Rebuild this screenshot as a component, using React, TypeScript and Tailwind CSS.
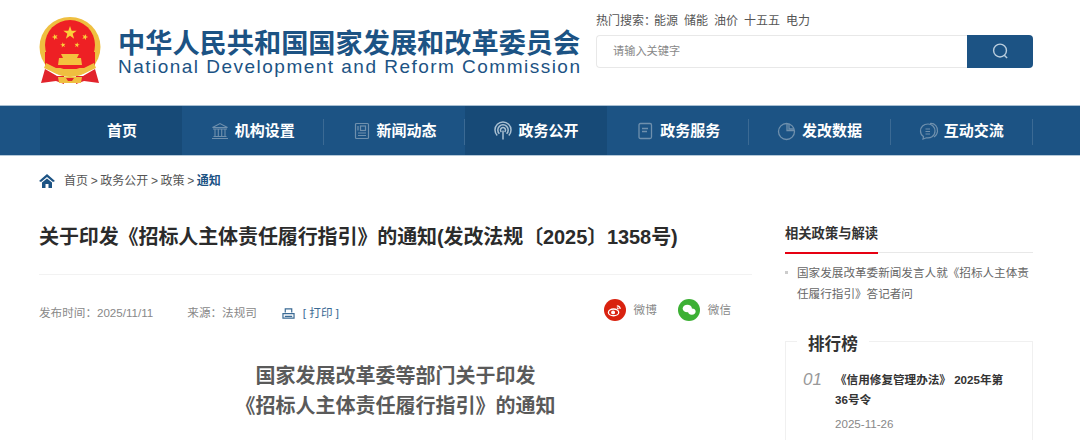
import React from "react";

const CJK = "font-['Liberation_Sans','Noto_Sans_CJK_SC',sans-serif]";

function Emblem() {
  const star = (cx: number, cy: number, r: number, rot = 0) => {
    const pts: string[] = [];
    for (let i = 0; i < 10; i++) {
      const a = ((-90 + rot + i * 36) * Math.PI) / 180;
      const rr = i % 2 === 0 ? r : r * 0.4;
      pts.push(`${cx + rr * Math.cos(a)},${cy + rr * Math.sin(a)}`);
    }
    return <polygon points={pts.join(" ")} fill="#fbd13a" />;
  };
  return (
    <svg width="62" height="67" viewBox="0 0 62 67" className="shrink-0">
      <ellipse cx="31" cy="30" rx="30.5" ry="30" fill="#efbf40" />
      <ellipse cx="31" cy="28" rx="25" ry="25" fill="#ee2024" />
      <rect x="6" y="35" width="50" height="16" fill="#ee2024" />
      {star(31, 16, 7)}
      {star(16, 20, 3.2, -20)}
      {star(46, 20, 3.2, 20)}
      {star(24, 28, 2.8, -10)}
      {star(38, 28, 2.8, 10)}
      <path d="M22 37 L40 37 L38 41 L42 41 L43 48 L19 48 L20 41 L24 41 Z" fill="#f4c23e" />
      <path d="M7 46 L19 52 L43 52 L55 46 L57 51 L44 57 L18 57 L5 51 Z" fill="#efbf40" />
      <path d="M24 57 C26 53 29 55 31 53 C33 55 36 53 38 57 Z" fill="#efbf40" />
      <path d="M6 52 L18 59 L25 59 L25 67 L17 64 L2 66 Z" fill="#e2232b" />
      <path d="M56 52 L44 59 L37 59 L37 67 L45 64 L60 66 Z" fill="#e2232b" />
      <path d="M19 60 L43 60 L42 66 L20 66 Z" fill="#efbf40" />
      <path d="M27 61 H35 L33 64 H29 Z" fill="#e2232b" />
    </svg>
  );
}

const iconCls = "w-[20px] h-[20px] text-[#6f90ad] shrink-0";
const NavIcons: Record<string, React.ReactNode> = {
  bank: (
    <svg viewBox="0 0 20 20" className={iconCls} fill="none" stroke="currentColor" strokeWidth="1.1">
      <path d="M2.5 6.5 L10 2.5 L17.5 6.5 Z M3 8 H17 M5 8.5 V15 M8.3 8.5 V15 M11.7 8.5 V15 M15 8.5 V15 M3.5 15.5 H16.5 M2 17.5 H18" />
    </svg>
  ),
  news: (
    <svg viewBox="0 0 20 20" className={iconCls} fill="none" stroke="currentColor" strokeWidth="1.2">
      <rect x="3.5" y="2.5" width="13" height="15" rx="1" />
      <rect x="8.5" y="5" width="5" height="4.5" />
      <path d="M6 5 V9.5 M6 12 H14 M6 14.5 H14" />
    </svg>
  ),
  signal: (
    <svg viewBox="0 0 20 20" className="w-[20px] h-[20px] text-[#a9c0d2] shrink-0" fill="none" stroke="currentColor" strokeWidth="1.5">
      <path d="M4.2 14.5 A8 8 0 1 1 15.8 14.5 M6.4 12.8 A5.2 5.2 0 1 1 13.6 12.8 M8.4 11 A2.5 2.5 0 1 1 11.6 11" />
      <path d="M10 9.5 V18.5" />
    </svg>
  ),
  doc: (
    <svg viewBox="0 0 20 20" className={iconCls} fill="none" stroke="currentColor" strokeWidth="1.3">
      <path d="M4 4 Q4 2.5 5.5 2.5 H15 Q16.5 2.5 16.5 4 V16 Q16.5 17.5 15 17.5 H5.5 Q4 17.5 4 16 Z" />
      <path d="M7 7.5 H13 M7 10.5 H12" />
    </svg>
  ),
  pie: (
    <svg viewBox="0 0 20 20" className={iconCls} fill="none" stroke="currentColor" strokeWidth="1.3">
      <circle cx="9.5" cy="10.5" r="8" />
      <path d="M10 2.5 V9.5 H17.5" />
      <path d="M12 3 V8 H17" />
    </svg>
  ),
  chat: (
    <svg viewBox="0 0 20 20" className={iconCls} fill="none" stroke="currentColor" strokeWidth="1.2">
      <path d="M9 3 C4.5 3 1.5 6 1.5 10 C1.5 12.5 2.8 14.5 4.5 15.5 L4 18 L7.5 16.8 C11 17.5 16 15.5 16 10 C16 6 13 3 9 3 Z" />
      <path d="M11 2.5 C16 2 19 6 18.5 10.5 C18.2 13 17 14.8 15 16" />
      <path d="M6.5 8 H11 M6.5 10.5 H11 M6.5 13 H11" />
    </svg>
  ),
};

const navs: { label: string; icon?: string; active?: boolean; sep?: boolean }[] = [
  { label: "首页", active: true },
  { label: "机构设置", icon: "bank", sep: true },
  { label: "新闻动态", icon: "news", sep: true },
  { label: "政务公开", icon: "signal", active: true },
  { label: "政务服务", icon: "doc", sep: true },
  { label: "发改数据", icon: "pie", sep: true },
  { label: "互动交流", icon: "chat", sep: true },
];

export default function App() {
  return (
    <div className={`w-[1080px] h-[440px] overflow-hidden bg-white ${CJK}`}>
      <header className="h-[105px] pl-[39px] pr-[47px] flex justify-between">
        <div className="flex items-start pt-[17px]">
          <Emblem />
          <div className="ml-[17px] pt-[13px] text-[#1c5384]">
            <div className="text-[27.2px] leading-[28px] font-bold whitespace-nowrap">中华人民共和国国家发展和改革委员会</div>
            <div className="text-[19px] leading-[18px] tracking-[1.48px] whitespace-nowrap">National Development and Reform Commission</div>
          </div>
        </div>
        <div className="w-[437px] pt-[13px]">
          <div className="h-[15px] mt-[1px] flex items-center gap-[6px] text-[12px] leading-[15px] text-[#555]">
            <span>热门搜索<span className="tracking-[-8px]">：</span></span>
            <span>能源</span>
            <span>储能</span>
            <span>油价</span>
            <span>十五五</span>
            <span>电力</span>
          </div>
          <div className="mt-[6px] h-[33px] flex">
            <div className="flex-1 border border-[#e8e8e8] border-r-0 rounded-l-[4px] pl-[16px] text-[11.2px] leading-[31px] text-[#888]">请输入关键字</div>
            <div className="w-[66px] bg-[#1c5384] rounded-r-[4px] flex items-center justify-center">
              <svg viewBox="0 0 18 18" className="w-[17px] h-[17px]" fill="none" stroke="#b9cddd" strokeWidth="1.5">
                <circle cx="8.5" cy="8" r="6.8" />
                <path d="M13 13 L16 16" />
              </svg>
            </div>
          </div>
        </div>
      </header>

      <nav className="h-[51px] bg-[#1c5384] border-t border-b border-t-[#a9c0d3] border-b-[#b5c9d9] pl-[40px] flex items-stretch">
        {navs.map((n, i) => (
          <div
            key={n.label}
            className={`relative w-[141.8px] flex items-center gap-[5px] pt-[1px] ${i === 0 ? "pl-[67px]" : "pl-[28px]"} ${n.active ? "bg-[#174a77]" : ""}`}
          >
            {n.icon ? NavIcons[n.icon] : null}
            <span className="text-[15px] font-bold text-white whitespace-nowrap">{n.label}</span>
            {n.sep ? <span className="absolute right-0 top-[13px] w-px h-[26px] bg-[#3b6a94]" /> : null}
          </div>
        ))}
      </nav>

      <div className="pl-[39px] pr-[47px]">
        <div className="h-[50px] flex items-center text-[12px] text-[#555]">
          <svg viewBox="0 0 16 14" className="w-[16px] h-[14px] mr-[9px] text-[#1c5384]" fill="currentColor">
            <path d="M8 0 L16 7 L14 8 L8 3 L2 8 L0 7 Z M3 8.5 L8 4.5 L13 8.5 V14 H9.5 V10 H6.5 V14 H3 Z" />
          </svg>
          <span className="[word-spacing:-0.7px]">首页 &gt; 政务公开 &gt; 政策 &gt; <b className="text-[#1c5384]">通知</b></span>
        </div>

        <div className="flex justify-between">
          <main className="w-[713px]">
            <h1 className="pt-[18px] h-[69px] text-[20px] leading-[26px] tracking-[-0.1px] font-bold text-[#2b2b2b] whitespace-nowrap border-b border-[#f2f2f2]">
              关于印发《招标人主体责任履行指引》的通知(发改法规〔2025〕1358号)
            </h1>
            <div className="h-[72px] flex items-center text-[11.6px] text-[#888]">
              <span className="mt-[4px]">发布时间：2025/11/11</span>
              <span className="ml-[34px] mt-[4px]">来源：法规司</span>
              <svg viewBox="0 0 14 13" className="w-[13px] h-[12px] ml-[25px] mr-[8px] mt-[5px]" fill="none" stroke="#3a6a94" strokeWidth="1.3">
                <path d="M3.5 5 V1 H10.5 V5 M1 6 H13 V11 H1 Z M3 9 H11" />
              </svg>
              <span className="text-[#3a6a94] mt-[4px]">[ 打印 ]</span>
              <div className="ml-auto mr-[21px] mb-[2px] flex items-center">
                <span className="w-[22px] h-[22px] rounded-full bg-[#d9220f] flex items-center justify-center">
                  <svg viewBox="0 0 16 16" className="w-[15px] h-[15px]" fill="none" stroke="#fff" strokeWidth="1.4">
                    <ellipse cx="7" cy="10" rx="5.5" ry="3.6" />
                    <circle cx="6.5" cy="10" r="1.4" fill="#fff" />
                    <path d="M10.5 3 A3.5 3.5 0 0 1 14 6.5 M10.5 5.2 A1.5 1.5 0 0 1 12 6.7" />
                  </svg>
                </span>
                <span className="ml-[8px]">微博</span>
                <span className="ml-[21px] w-[22px] h-[22px] rounded-full bg-[#3cb034] flex items-center justify-center">
                  <svg viewBox="0 0 16 16" className="w-[16px] h-[16px]" fill="#fff">
                    <ellipse cx="6.3" cy="6.5" rx="4.6" ry="3.8" />
                    <ellipse cx="10.8" cy="9.6" rx="3.8" ry="3.1" />
                  </svg>
                </span>
                <span className="ml-[8px]">微信</span>
              </div>
            </div>
            <div className="mt-[14px] text-center text-[20px] leading-[30px] font-bold text-[#5a5a5a]">
              <div>国家发展改革委等部门关于印发</div>
              <div>《招标人主体责任履行指引》的通知</div>
            </div>
          </main>

          <aside className="w-[248px] pt-[15px]">
            <div className="border-b border-[#e8e8e8] h-[32px]">
              <span className="inline-block h-[32px] w-[93px] border-b-2 border-[#e60012] text-[13.3px] leading-[24px] font-bold text-[#333] whitespace-nowrap">相关政策与解读</span>
            </div>
            <div className="relative mt-[9px] pl-[12px] text-[11.6px] leading-[21px] text-[#666]">
              <span className="absolute left-0 top-[9px] w-[3px] h-[3px] bg-[#ccc]" />
              国家发展改革委新闻发言人就《招标人主体责任履行指引》答记者问
            </div>
            <div className="relative mt-[37px] border border-[#f0f0f0] pl-[17px] pr-[17px] pt-[26px] pb-[40px]">
              <span className="absolute left-[11px] -top-[8px] bg-white px-[11px] text-[16.6px] leading-[22px] font-bold text-[#333]">排行榜</span>
              <div className="flex">
                <span className="w-[32px] shrink-0 text-[17px] leading-[24px] italic text-[#999]">01</span>
                <div className="mt-[2px]">
                  <div className="text-[11.6px] leading-[20px] font-bold text-[#333]">《信用修复管理办法》 2025年第36号令</div>
                  <div className="mt-[4px] text-[11.6px] leading-[20px] text-[#888]">2025-11-26</div>
                </div>
              </div>
            </div>
          </aside>
        </div>
      </div>
    </div>
  );
}
